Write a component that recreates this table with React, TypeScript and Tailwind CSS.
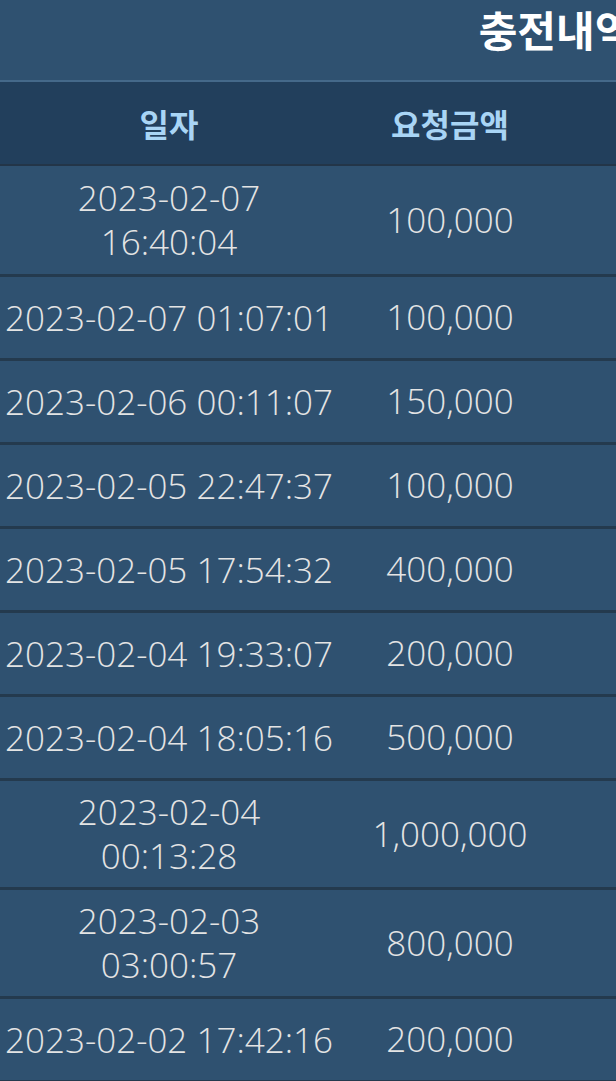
const rows: { date: string; time: string; amount: string; wrap?: boolean }[] = [
  { date: "2023-02-07", time: "16:40:04", amount: "100,000", wrap: true },
  { date: "2023-02-07", time: "01:07:01", amount: "100,000" },
  { date: "2023-02-06", time: "00:11:07", amount: "150,000" },
  { date: "2023-02-05", time: "22:47:37", amount: "100,000" },
  { date: "2023-02-05", time: "17:54:32", amount: "400,000" },
  { date: "2023-02-04", time: "19:33:07", amount: "200,000" },
  { date: "2023-02-04", time: "18:05:16", amount: "500,000" },
  { date: "2023-02-04", time: "00:13:28", amount: "1,000,000", wrap: true },
  { date: "2023-02-03", time: "03:00:57", amount: "800,000", wrap: true },
  { date: "2023-02-02", time: "17:42:16", amount: "200,000" },
]

function App() {
  return (
    <div className="w-[616px] h-[1081px] overflow-hidden bg-[#2f5170] font-['Open_Sans','Noto_Sans_CJK_KR',sans-serif]">
      <div className="w-[1112px]">
        <div className="h-20 flex items-start justify-center text-[42px] leading-[58px] font-bold text-white font-['Noto_Sans_CJK_KR',sans-serif]">
          충전내역
        </div>
        <table className="w-full border-collapse border-t-2 border-[#45698a]">
          <thead>
            <tr className="bg-[#223f5c] border-b-2 border-[#233548]">
              <th className="w-[338px] h-[84px] text-[32px] font-bold text-[#a9d5f5] font-['Noto_Sans_CJK_KR',sans-serif]">일자</th>
              <th className="w-[224px] text-[32px] font-bold text-[#a9d5f5] font-['Noto_Sans_CJK_KR',sans-serif]">요청금액</th>
              <th></th>
            </tr>
          </thead>
          <tbody>
            {rows.map((r, i) => (
              <tr key={i} className="border-b-[3px] border-[#243a4e]">
                <td className={`h-[84px] text-center text-[35px] font-light leading-[44px] text-[#e4e4e4] ${i === 0 ? "py-[10px]" : "py-[9px]"}`}>
                  {r.wrap ? (
                    <>
                      {r.date}
                      <br />
                      {r.time}
                    </>
                  ) : (
                    `${r.date} ${r.time}`
                  )}
                </td>
                <td className="text-center text-[35px] font-light text-[#e4e4e4]">{r.amount}</td>
                <td></td>
              </tr>
            ))}
          </tbody>
        </table>
      </div>
    </div>
  )
}

export default App
